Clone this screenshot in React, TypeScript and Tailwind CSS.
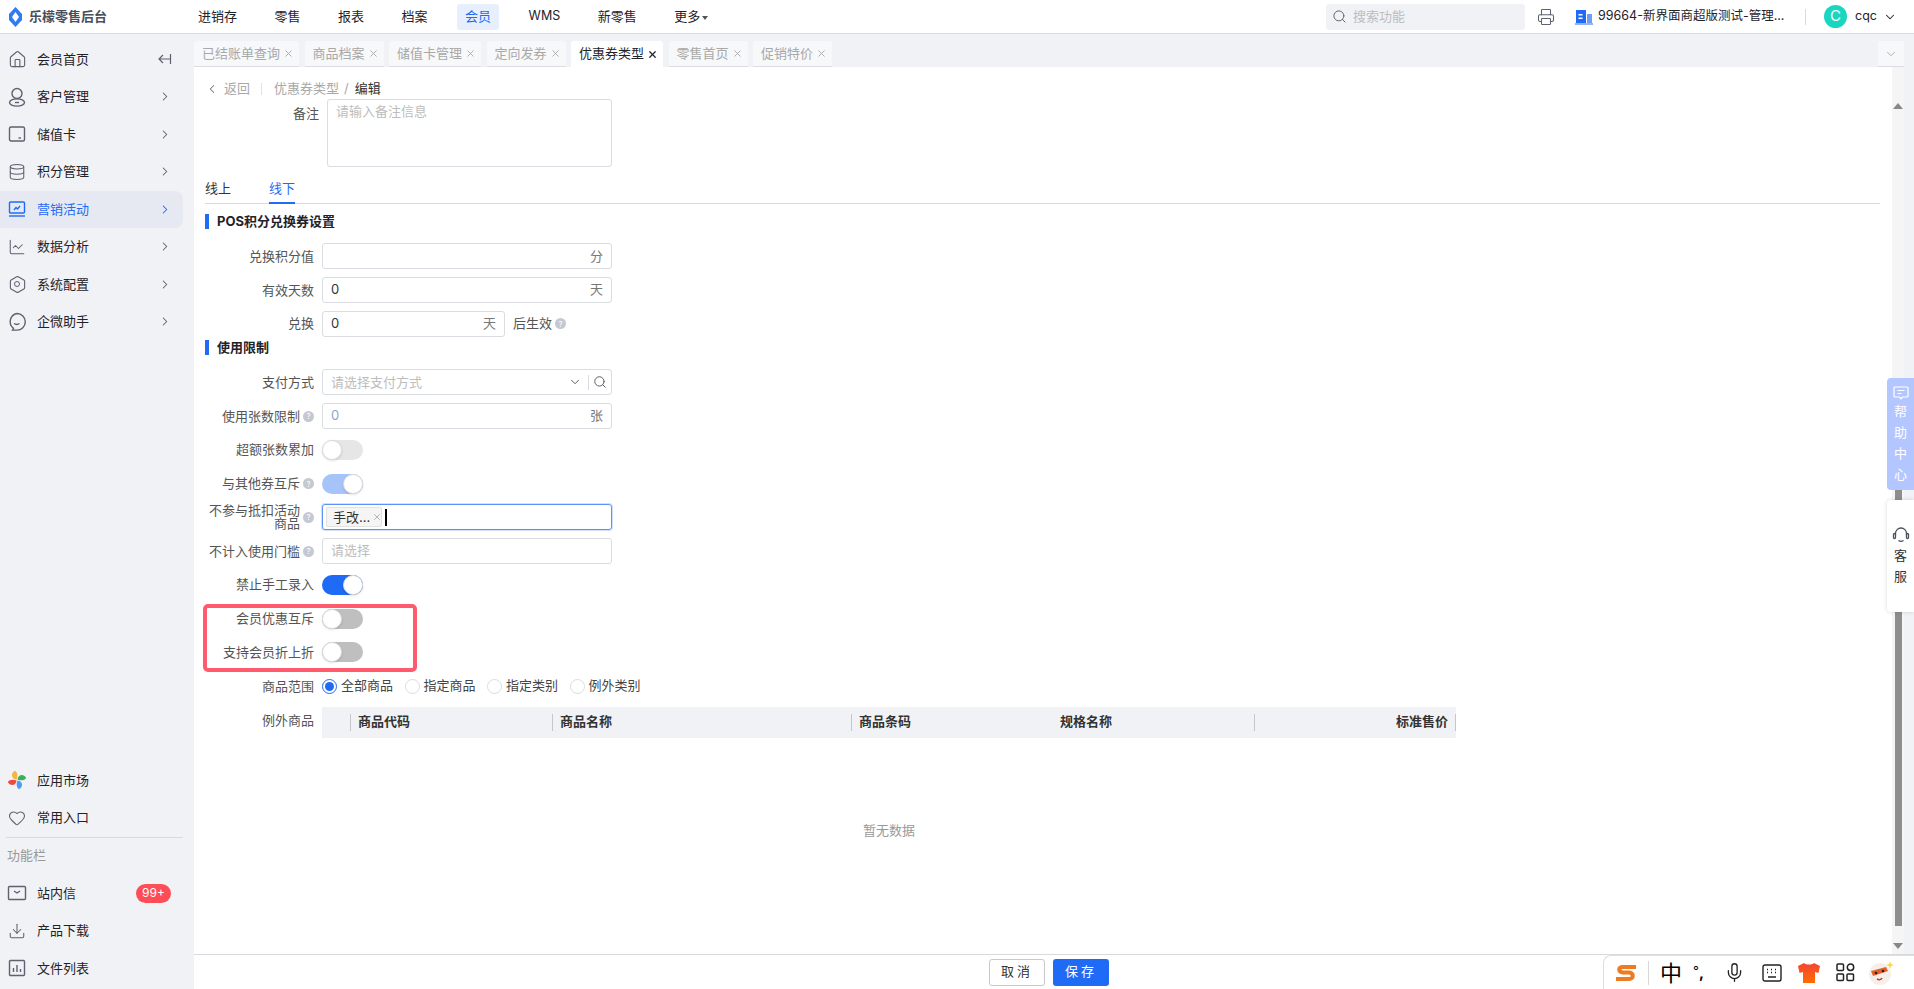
import React from "react";
import {
  ChartLine,
  ChevronDown,
  ChevronLeft,
  ChevronRight,
  Database,
  Heart,
  Hexagon,
  House,
  Download,
  Mic,
  Printer,
  Search,
  X,
} from "lucide-react";

const IconUser = () => (
  <svg width="18" height="20" viewBox="0 0 18 20" fill="none" stroke="#5c6270" strokeWidth="1.4">
    <circle cx="9" cy="6.5" r="5" />
    <ellipse cx="9" cy="15.5" rx="7.5" ry="3.6" />
    <path d="M7 15.5h4" />
  </svg>
);

const IconCard = () => (
  <svg width="18" height="18" viewBox="0 0 18 18" fill="none" stroke="#5c6270" strokeWidth="1.4">
    <rect x="1.5" y="2" width="15" height="14" rx="1.5" />
    <path d="M10.5 13h2.5" />
  </svg>
);

const IconScreen = () => (
  <svg width="18" height="18" viewBox="0 0 18 18" fill="none" stroke="#1f6bf5" strokeWidth="1.4">
    <rect x="1.5" y="2" width="15" height="11" rx="1" />
    <path d="M1 16h16" />
    <path d="M6 10l2-2.5 1.5 1.5L12 6" />
  </svg>
);

const IconChat = () => (
  <svg width="20" height="20" viewBox="0 0 20 20" fill="none" stroke="#5c6270" strokeWidth="1.4">
    <path d="M10 1.5a8.3 8.3 0 0 1 0 16.6H5.500l1-1.800A8.300 8.300 0 0 1 10 1.500z" />
    <path d="M7 11.500c1.500 1 4 1 5.500 0" />
  </svg>
);

const IconHexa = () => (
  <span className="relative flex h-5 w-5 items-center justify-center">
    <Hexagon size={19} strokeWidth={1.4} color="#5c6270" />
    <span className="absolute h-[6px] w-[6px] rounded-full border border-[#5c6270]" />
  </span>
);

const IconApps = () => (
  <svg width="20" height="20" viewBox="0 0 20 20">
    <path d="M9.500 9.500C4 9 3.500 3 8 .8c2.500 1.500 3 5.500 1.500 8.700z" fill="#f5b53d" />
    <path d="M10.500 9.500C11 4 17 3.500 19.200 8c-1.500 2.500-5.500 3-8.700 1.500z" fill="#36b35a" />
    <path d="M10.500 10.500c5.500.5 6 6.500 1.500 8.700-2.500-1.500-3-5.500-1.500-8.700z" fill="#4f9cf5" />
    <path d="M9.500 10.500C9 16 3 16.500.8 12c1.500-2.500 5.500-3 8.700-1.500z" fill="#ee4a3c" />
  </svg>
);

const IconMail = () => (
  <svg width="20" height="16" viewBox="0 0 20 16" fill="none" stroke="#5c6270" strokeWidth="1.4">
    <rect x="1.500" y="1.500" width="17" height="13" rx="1" />
    <path d="M7 6l3 2 3-2" />
  </svg>
);

const IconBars = () => (
  <svg width="18" height="18" viewBox="0 0 18 18" fill="none" stroke="#5c6270" strokeWidth="1.4">
    <rect x="1.500" y="1.500" width="15" height="15" rx="1" />
    <path d="M5.500 13V9M9 13V6M12.500 13V10" />
  </svg>
);

const IconCollapse = () => (
  <svg width="14" height="12" viewBox="0 0 14 12" fill="none" stroke="#5c6270" strokeWidth="1.200">
    <path d="M1 6h11M5 2L1 6l4 4M12.500 1v10" />
  </svg>
);

const IconBuilding = () => (
  <svg width="18" height="18" viewBox="0 0 18 18">
    <rect x="1" y="2" width="10" height="13" fill="#1f6bf5" />
    <rect x="12" y="6" width="5" height="9" fill="#6f9ff5" />
    <rect x="3.500" y="6" width="4" height="1.500" fill="#fff" />
    <rect x="3.500" y="9.500" width="4" height="1.500" fill="#fff" />
    <rect x="0" y="15" width="18" height="2" fill="#8fb4f7" />
  </svg>
);

const IconBubble = () => (
  <svg width="16" height="14" viewBox="0 0 16 14" fill="none" stroke="#fff" strokeWidth="1.200">
    <path d="M2 1h12a1 1 0 0 1 1 1v8a1 1 0 0 1-1 1H9.500L8 12.800 6.500 11H2a1 1 0 0 1-1-1V2a1 1 0 0 1 1-1z" />
    <path d="M4.500 4.500h7M4.500 7.500h4" />
  </svg>
);

const IconHeadset = () => (
  <svg width="18" height="18" viewBox="0 0 18 18" fill="none" stroke="#4a4f5c" strokeWidth="1.300">
    <path d="M3.500 9V7.500a5.500 5.500 0 0 1 11 0V9" />
    <rect x="1.500" y="7.500" width="2" height="5" rx="1" />
    <rect x="14.500" y="7.500" width="2" height="5" rx="1" />
    <path d="M6.500 14.500c1.500 1 3.500 1 5 0" />
  </svg>
);

const menu = [
  { label: "会员首页", icon: <House size={19} strokeWidth={1.4} color="#5c6270" /> },
  { label: "客户管理", icon: <IconUser /> },
  { label: "储值卡", icon: <IconCard /> },
  { label: "积分管理", icon: <Database size={18} strokeWidth={1.4} color="#5c6270" /> },
  { label: "营销活动", icon: <IconScreen />, active: true },
  { label: "数据分析", icon: <ChartLine size={18} strokeWidth={1.4} color="#5c6270" /> },
  { label: "系统配置", icon: <IconHexa /> },
  { label: "企微助手", icon: <IconChat /> },
];

const topNav = ["进销存", "零售", "报表", "档案", "会员", "WMS", "新零售"];

const tabs = ["已结账单查询", "商品档案", "储值卡管理", "定向发券", "优惠券类型", "零售首页", "促销特价"];

const Help = () => (
  <span className="ml-[3px] flex h-[11px] w-[11px] shrink-0 items-center justify-center rounded-full bg-[#c3c8d1] text-[8px] leading-none text-white">
    ?
  </span>
);

const Row: React.FC<{ label: React.ReactNode; help?: boolean; children: React.ReactNode }> = ({
  label,
  help,
  children,
}) => (
  <div className="flex h-[33.75px] items-center">
    <div className="flex w-[109px] shrink-0 items-center justify-end text-right text-[13px] leading-[13px] text-[#555]">
      <span>{label}</span>
      {help && <Help />}
    </div>
    <div className="ml-2 flex items-center">{children}</div>
  </div>
);

const Field: React.FC<{ value?: string; unit?: string; wide?: boolean; placeholder?: string }> = ({
  value,
  unit,
  wide = true,
  placeholder,
}) => (
  <div
    className={`flex h-[26px] items-center justify-between rounded-[3px] border border-[#d9dce1] px-2 text-[13px] ${
      wide ? "w-[290px]" : "w-[183px]"
    }`}
  >
    <span className={placeholder ? "text-[#bdbdbd]" : "text-[#333]"}>{placeholder || value}</span>
    {unit && <span className="text-[#777]">{unit}</span>}
  </div>
);

const Toggle: React.FC<{ on?: boolean; track: string }> = ({ on, track }) => (
  <div className={`flex h-[20px] w-[41px] rounded-full ${track} ${on ? "justify-end" : "justify-start"}`}>
    <div className="h-[20px] w-[20px] rounded-full border border-[#dcdcdc] bg-white shadow-sm" />
  </div>
);

const Radio: React.FC<{ label: string; checked?: boolean }> = ({ label, checked }) => (
  <div className="flex items-center gap-[4px]">
    <span
      className={`flex h-[15px] w-[15px] items-center justify-center rounded-full border bg-white ${
        checked ? "border-[#1f6bf5]" : "border-[#d9dce1]"
      }`}
    >
      {checked && <span className="h-[9px] w-[9px] rounded-full bg-[#1f6bf5]" />}
    </span>
    <span className="text-[13px] text-[#444]">{label}</span>
  </div>
);

const SectionTitle: React.FC<{ text: string }> = ({ text }) => (
  <div className="flex h-[15px] items-center gap-2">
    <span className="h-[15px] w-1 bg-[#1f6bf5]" />
    <span className="text-[13px] font-bold text-[#1f2329]">{text}</span>
  </div>
);

const columns = [
  { label: "", width: "w-[28px]", line: false },
  { label: "商品代码", width: "w-[202px]", line: true },
  { label: "商品名称", width: "w-[299px]", line: true },
  { label: "商品条码", width: "w-[202px]", line: true },
  { label: "规格名称", width: "w-[201px]", line: false },
];

export default function App() {
  return (
    <div className="relative flex h-[989px] w-[1914px] flex-col overflow-hidden bg-white font-['Inter','Noto_Sans_CJK_SC',sans-serif] text-[13px] text-[#1f2329]">
      {/* top bar */}
      <header className="flex h-[34px] shrink-0 items-center border-b border-[#d8dade] bg-white">
        <div className="flex w-[190px] shrink-0 items-center pl-[8px]">
          <svg width="15" height="20" viewBox="0 0 15 20">
            <path d="M7.500 0L14 7v6l-6.500 7L1 13V7z" fill="#2f7bf0" />
            <path d="M7.500 5l3.500 5-3.500 5L4 10z" fill="#fff" />
          </svg>
          <span className="ml-[6px] text-[13px] font-bold text-[#4a4f5c]">乐檬零售后台</span>
        </div>
        <nav className="flex items-center gap-[21.500px]">
          {topNav.map((t) => (
            <div
              key={t}
              className={`flex h-[26px] items-center rounded-[3px] px-2 ${
                t === "会员" ? "bg-[#e8effc] text-[#1f6bf5]" : "text-[#1f2329]"
              } ${t === "WMS" ? "text-[12.500px]" : ""}`}
            >
              {t}
            </div>
          ))}
          <div className="flex items-center px-2">
            更多
            <span className="ml-[2px] mt-[2px] border-x-[3px] border-t-[4px] border-x-transparent border-t-[#555]" />
          </div>
        </nav>
        <div className="ml-auto flex h-[26px] w-[199px] items-center rounded-[3px] bg-[#f1f2f5] pl-[6px] text-[#bdbdbd]">
          <Search size={15} strokeWidth={1.6} color="#666" />
          <span className="ml-[6px]">搜索功能</span>
        </div>
        <Printer size={18} strokeWidth={1.4} color="#5c6270" className="ml-[12px]" />
        <div className="ml-[20px]">
          <IconBuilding />
        </div>
        <span className="ml-[5px] w-[186px] whitespace-nowrap text-[12.500px] text-[#1f2329]">
          99664-新界面商超版测试-管理...
        </span>
        <span className="ml-[21px] h-[16px] w-px bg-[#d8dade]" />
        <span className="ml-[18px] flex h-[23px] w-[23px] items-center justify-center rounded-full bg-[#19d6c0] text-[15px] text-white">
          C
        </span>
        <span className="ml-2 text-[12.500px]">cqc</span>
        <ChevronDown size={14} strokeWidth={1.8} className="ml-[6px] mr-[17px]" />
      </header>

      <div className="flex min-h-0 flex-1">
        {/* sidebar */}
        <aside className="flex w-[194px] shrink-0 flex-col bg-[#f1f2f5] pt-[6.500px]">
          {menu.map((m, i) => (
            <div
              key={m.label}
              className={`flex h-[37.500px] w-[183px] shrink-0 items-center rounded-r-lg pl-[7px] ${
                m.active ? "bg-[#e6e9f2] text-[#1f6bf5]" : ""
              }`}
            >
              <span className="flex w-[20px] justify-center">{m.icon}</span>
              <span className="ml-[10px]">{m.label}</span>
              <span className="ml-auto mr-[11px] flex w-[14px] justify-center">
                {i === 0 ? (
                  <IconCollapse />
                ) : (
                  <ChevronRight size={15} strokeWidth={1.8} color={m.active ? "#1f6bf5" : "#5c6270"} />
                )}
              </span>
            </div>
          ))}
          <div className="mt-auto pb-[2px]">
            <div className="flex h-[37.500px] items-center pl-[7px]">
              <span className="flex w-[20px] justify-center">
                <IconApps />
              </span>
              <span className="ml-[10px]">应用市场</span>
            </div>
            <div className="flex h-[37.500px] items-center pl-[7px]">
              <span className="flex w-[20px] justify-center">
                <Heart size={18} strokeWidth={1.4} color="#5c6270" />
              </span>
              <span className="ml-[10px]">常用入口</span>
            </div>
            <div className="ml-[6px] w-[177px] border-t border-[#d8dade]" />
            <div className="flex h-[37px] items-center pl-[7px] text-[#999]">功能栏</div>
            <div className="flex h-[37.500px] w-[183px] items-center pl-[7px]">
              <span className="flex w-[20px] justify-center">
                <IconMail />
              </span>
              <span className="ml-[10px]">站内信</span>
              <span className="ml-auto mr-[12px] flex h-[19px] w-[35px] items-center justify-center rounded-full bg-[#ff4d57] text-[12px] text-white">
                99+
              </span>
            </div>
            <div className="flex h-[37.500px] items-center pl-[7px]">
              <span className="flex w-[20px] justify-center">
                <Download size={18} strokeWidth={1.4} color="#5c6270" />
              </span>
              <span className="ml-[10px]">产品下载</span>
            </div>
            <div className="flex h-[37.500px] items-center pl-[7px]">
              <span className="flex w-[20px] justify-center">
                <IconBars />
              </span>
              <span className="ml-[10px]">文件列表</span>
            </div>
          </div>
        </aside>

        {/* main */}
        <main className="flex min-w-0 flex-1 flex-col">
          <div className="flex h-[33px] shrink-0 items-end gap-[5.500px] bg-[#f1f2f5] pr-[10px]">
            {tabs.map((t) => {
              const active = t === "优惠券类型";
              return (
                <div
                  key={t}
                  className={`flex h-[26px] items-center rounded-t-[3px] pl-2 pr-[5px] ${
                    active ? "bg-white text-[#1f2329]" : "border-b border-[#dcdde0] bg-[#f7f8fa] text-[#a8a8a8]"
                  }`}
                >
                  {t}
                  <X size={11} strokeWidth={active ? 2.6 : 2} className="ml-[3px]" />
                </div>
              );
            })}
            <div className="ml-auto flex h-[26px] w-[26px] items-center justify-center border-b border-[#dcdde0] bg-[#f7f8fa]">
              <ChevronDown size={14} strokeWidth={1.6} color="#aaa" />
            </div>
          </div>

          <div className="flex min-h-0 flex-1">
            <div className="min-w-0 flex-1 overflow-hidden pl-[11px]">
              {/* breadcrumb */}
              <div className="mt-[12px] flex h-[20px] items-center text-[13px] text-[#a8a8a8]">
                <ChevronLeft size={14} strokeWidth={1.8} color="#777" />
                <span className="ml-[5px]">返回</span>
                <span className="ml-[11px] h-[12px] w-px bg-[#e3e3e3]" />
                <span className="ml-[12px]">优惠券类型</span>
                <span className="ml-[5px]">/</span>
                <span className="ml-[6px] text-[#333]">编辑</span>
              </div>

              <div className="flex h-[68px] items-start">
                <span className="mt-[5px] w-[114px] text-right text-[#555]">备注</span>
                <div className="ml-2 h-[68px] w-[285px] rounded-[3px] border border-[#d9dce1] px-2 py-[2px] text-[#bdbdbd]">
                  请输入备注信息
                </div>
              </div>

              <div className="mt-[12px] flex w-[1675px] gap-[38px] border-b border-[#d8dade]">
                <div className="h-[24px] leading-[18px] text-[#333]">线上</div>
                <div className="-mb-px h-[25px] border-b-2 border-[#1f6bf5] leading-[18px] text-[#1f6bf5]">线下</div>
              </div>

              <div className="mt-[10px]">
                <SectionTitle text="POS积分兑换券设置" />
              </div>
              <div className="mt-[10.600px]">
                <Row label="兑换积分值">
                  <Field unit="分" />
                </Row>
                <Row label="有效天数">
                  <Field value="0" unit="天" />
                </Row>
                <Row label="兑换">
                  <Field value="0" unit="天" wide={false} />
                  <span className="ml-2 text-[#555]">后生效</span>
                  <Help />
                </Row>
              </div>

              <div className="-mt-[1px]">
                <SectionTitle text="使用限制" />
              </div>
              <div className="mt-[10.600px]">
                <Row label="支付方式">
                  <div className="flex h-[26px] w-[290px] items-center rounded-[3px] border border-[#d9dce1] pl-2 text-[#bdbdbd]">
                    请选择支付方式
                    <ChevronDown size={14} strokeWidth={1.6} color="#555" className="ml-auto" />
                    <span className="ml-[6px] h-[15px] w-px bg-[#d9dce1]" />
                    <Search size={14} strokeWidth={1.6} color="#555" className="mx-[4px]" />
                  </div>
                </Row>
                <Row label="使用张数限制" help>
                  <div className="flex h-[26px] w-[290px] items-center justify-between rounded-[3px] border border-[#d9dce1] px-2">
                    <span className="text-[#8aa6c8]">0</span>
                    <span className="text-[#777]">张</span>
                  </div>
                </Row>
                <Row label="超额张数累加">
                  <Toggle track="bg-[#e6e6e6]" />
                </Row>
                <Row label="与其他券互斥" help>
                  <Toggle on track="bg-[#a6c3fa]" />
                </Row>
                <Row
                  label={
                    <>
                      不参与抵扣活动
                      <br />
                      商品
                    </>
                  }
                  help
                >
                  <div className="flex h-[26px] w-[290px] items-center rounded-[3px] border border-[#5b94f7] pl-[3px] shadow-[0_0_0_1px_#cfe0fd]">
                    <span className="flex h-[20px] w-[56px] items-center whitespace-nowrap rounded-[2px] border border-[#e2e2e2] bg-[#f5f5f5] pl-[6px] text-[#333]">
                      手改...
                      <X size={10} strokeWidth={1.4} color="#888" className="ml-[2px] shrink-0" />
                    </span>
                    <span className="ml-[3px] h-[17px] w-[2px] bg-black" />
                  </div>
                </Row>
                <Row label="不计入使用门槛" help>
                  <Field placeholder="请选择" />
                </Row>
                <Row label="禁止手工录入">
                  <Toggle on track="bg-[#1f6bf5]" />
                </Row>
                <Row label="会员优惠互斥">
                  <Toggle track="bg-[#bfbfbf]" />
                </Row>
                <Row label="支持会员折上折">
                  <Toggle track="bg-[#bfbfbf]" />
                </Row>
                <Row label="商品范围">
                  <div className="flex items-center gap-[11.500px]">
                    <Radio label="全部商品" checked />
                    <Radio label="指定商品" />
                    <Radio label="指定类别" />
                    <Radio label="例外类别" />
                  </div>
                </Row>
              </div>

              {/* exception goods table */}
              <div className="mt-[3.800px] flex items-start">
                <span className="mt-[4px] w-[109px] text-right text-[#555]">例外商品</span>
                <div className="ml-2 w-[1134px]">
                  <div className="flex h-[31px] items-center bg-[#f1f2f5] font-bold text-[#333]">
                    {columns.map((c) => (
                      <div
                        key={c.label || "select"}
                        className={`flex h-[17px] shrink-0 items-center pl-[7px] ${c.width} ${
                          c.line ? "border-l border-[#c4c7ce]" : ""
                        }`}
                      >
                        {c.label}
                      </div>
                    ))}
                    <div className="flex h-[17px] flex-1 items-center justify-end border-x border-[#c4c7ce] pr-[7px]">
                      标准售价
                    </div>
                  </div>
                  <div className="flex h-[186px] items-center justify-center text-[#999]">暂无数据</div>
                </div>
              </div>
            </div>

            {/* page scrollbar */}
            <div className="flex w-[12px] shrink-0 flex-col items-center bg-[#f5f5f5]">
              <span className="mt-[36px] border-x-[5px] border-b-[6px] border-x-transparent border-b-[#888]" />
              <span className="mt-[377px] h-[440px] w-[7px] bg-[#8e8e8e]" />
              <span className="mt-auto mb-[5px] border-x-[5px] border-t-[6px] border-x-transparent border-t-[#888]" />
            </div>
            <div className="w-[10px] shrink-0 bg-[#f1f2f5]" />
          </div>

          <footer className="flex h-[35px] shrink-0 items-center border-t border-[#d8dade] bg-white pl-[795px]">
            <button className="h-[27px] w-[56px] rounded-[3px] border border-[#c9c9c9] bg-white tracking-[3px] text-[#333]">
              取消
            </button>
            <button className="ml-2 h-[27px] w-[56px] rounded-[3px] bg-[#1f6bf5] tracking-[3px] text-white">保存</button>
          </footer>
        </main>
      </div>

      {/* annotation around the two switches */}
      <div className="pointer-events-none absolute left-[203px] top-[604px] h-[68px] w-[214px] rounded-[5px] border-4 border-[#ff5a6e]" />

      {/* help center + service floats */}
      <div className="absolute left-[1887px] top-[378px] flex h-[112px] w-[27px] flex-col items-center gap-[2px] rounded-l-[4px] bg-[#b3c6ff] pt-[8px] text-[13px] leading-[19px] text-white">
        <IconBubble />
        <span>帮</span>
        <span>助</span>
        <span>中</span>
        <span>心</span>
      </div>
      <div className="absolute left-[1887px] top-[500px] flex h-[112px] w-[27px] flex-col items-center gap-[2px] rounded-l-[4px] bg-white pt-[26px] text-[13px] leading-[19px] text-[#333] shadow-[0_0_4px_rgba(0,0,0,0.15)]">
        <IconHeadset />
        <span>客</span>
        <span>服</span>
      </div>

      {/* input method bar */}
      <div className="absolute left-[1603px] top-[955px] flex h-[34px] w-[311px] items-center rounded-tl-[8px] border-l border-t border-[#dedede] bg-white">
        <svg width="24" height="20" viewBox="0 0 24 20" fill="none" stroke="#ee7a22" strokeWidth="4" className="ml-[10px]">
          <path d="M22 4H9C4 4 4 9 9 9.500h6c5 .5 5 6.500 0 6.500H2" />
        </svg>
        <span className="ml-[10px] h-[24px] w-px bg-[#d8d8d8]" />
        <span className="ml-[11px] text-[22px] leading-none text-black">中</span>
        <span className="ml-[11px] flex w-[16px] items-start text-[15px] leading-none text-black">
          <span className="text-[13px]">°</span>
          <span className="font-bold">,</span>
        </span>
        <Mic size={21} strokeWidth={1.5} color="#222" className="ml-[15px]" />
        <svg width="20" height="18" viewBox="0 0 20 18" fill="none" stroke="#222" strokeWidth="1.400" className="ml-[17px]">
          <rect x="1" y="1" width="18" height="16" rx="2" />
          <path d="M5 5.500h1M9 5.500h1M13 5.500h1M5 8.500h1M9 8.500h1M13 8.500h1M6 13h8" />
        </svg>
        <svg width="24" height="22" viewBox="0 0 24 22" className="ml-[15px]">
          <defs>
            <linearGradient id="shirt" x1="0" y1="0" x2="0" y2="1">
              <stop offset="0" stopColor="#f44336" />
              <stop offset="1" stopColor="#ff6d00" />
            </linearGradient>
          </defs>
          <path d="M7 1c2 2 8 2 10 0l6 3-1.500 7-3.500-1v11H6V10l-3.500 1L1 4z" fill="url(#shirt)" />
        </svg>
        <svg width="19" height="19" viewBox="0 0 19 19" fill="none" stroke="#222" strokeWidth="1.500" className="ml-[15px]">
          <rect x="1" y="1" width="6.500" height="6.500" rx="1" />
          <circle cx="14.500" cy="4.200" r="3.200" />
          <rect x="1" y="11" width="6.500" height="6.500" rx="1" />
          <rect x="11" y="11" width="6.500" height="6.500" rx="1" />
        </svg>
        <svg width="26" height="26" viewBox="0 0 26 26" className="ml-[13px]">
          <circle cx="12" cy="14" r="11" fill="#f6efe9" />
          <path d="M3 11l15-4 2 4-15 5z" fill="#e4622a" />
          <circle cx="8" cy="13" r="1.300" fill="#222" />
          <circle cx="15" cy="11" r="1.300" fill="#222" />
          <path d="M9 19c2 1 4 1 5-1" stroke="#c33" strokeWidth="1.500" fill="none" />
          <path d="M22 1l1 3 3 1-3 1-1 3-1-3-3-1 3-1z" fill="#f8d648" />
        </svg>
      </div>
    </div>
  );
}
